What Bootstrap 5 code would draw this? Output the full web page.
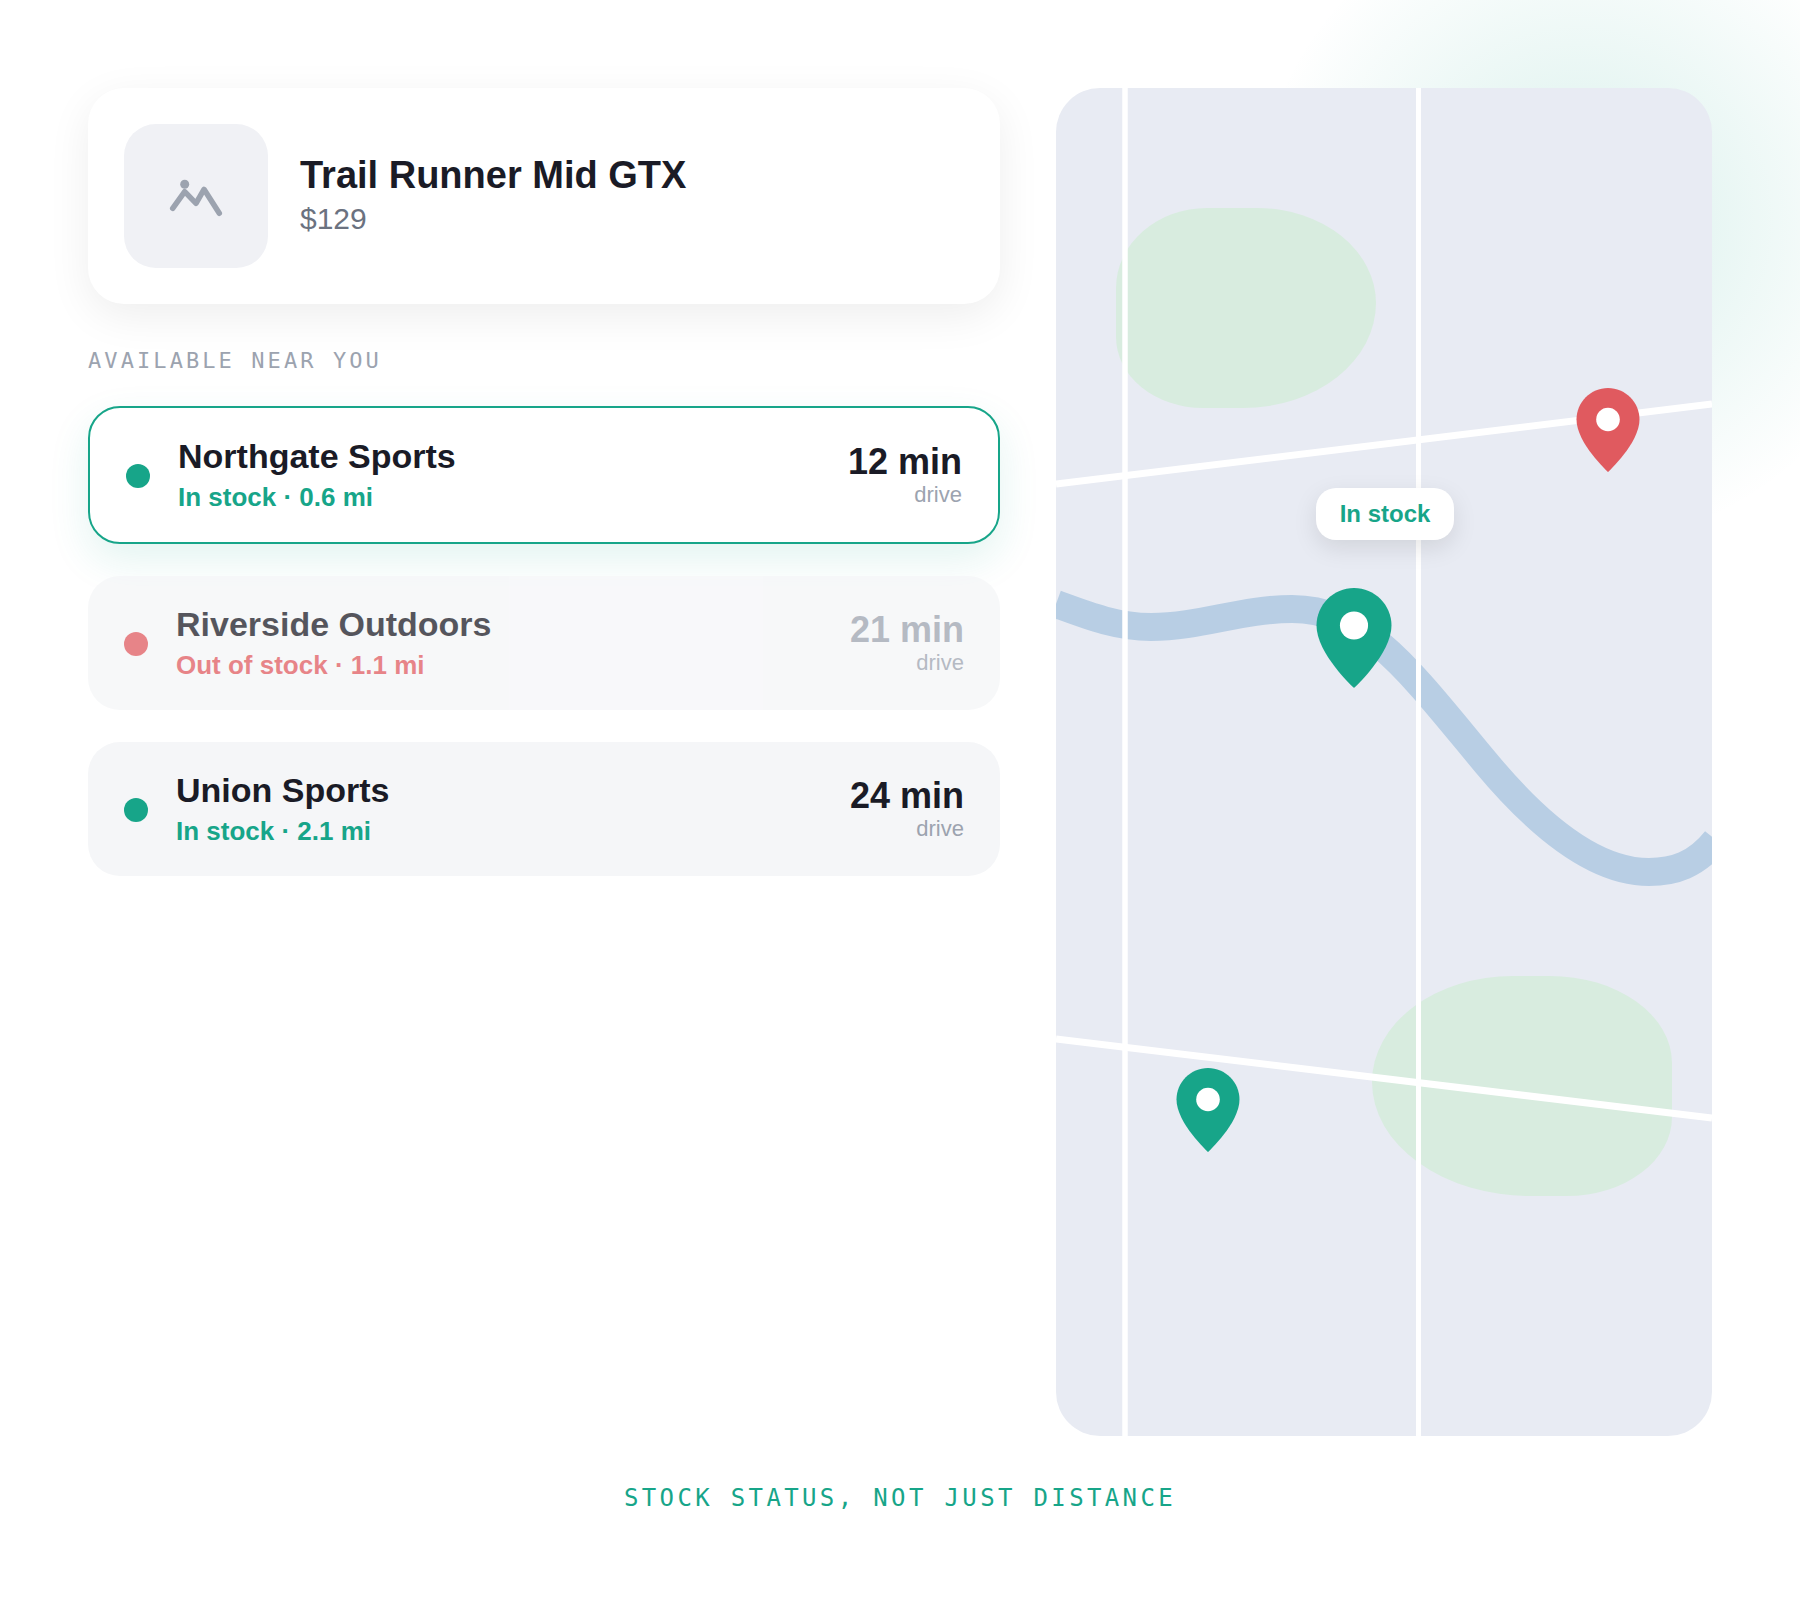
<!DOCTYPE html>
<html lang="en">
<head>
  <meta charset="UTF-8">
  <meta name="viewport" content="width=device-width, initial-scale=1.0">
  <title>Trail Runner Mid GTX - Stock nearby</title>
  <link href="https://cdn.jsdelivr.net/npm/bootstrap@5.3.0/dist/css/bootstrap.min.css" rel="stylesheet">
  <style>
    body { background: #fff; font-family: "Liberation Sans", Arial, sans-serif; color: #1a1b26; }
    .page-wrap { position: relative; width: 1800px; height: 1600px; overflow: clip; padding: 88px 88px 0; }
    .glow { position: absolute; left: 1250px; top: -110px; width: 660px; height: 660px; background: radial-gradient(circle, rgba(23, 165, 137, .17), transparent 70%); }
    .main-row { position: relative; gap: 56px; height: 1348px; }
    .left-col { width: 912px; }
    .product-card { background: #fff; border-radius: 36px; padding: 36px; gap: 32px; box-shadow: 0 12px 44px rgba(0, 0, 0, .07); }
    .product-thumb { width: 144px; height: 144px; border-radius: 32px; background: #f0f1f5; }
    .product-info { padding-bottom: 3px; }
    .product-name { font-size: 38px; line-height: 46px; font-weight: 700; margin-bottom: 3px; }
    .product-price { font-size: 30px; line-height: 36px; color: #6b7280; }
    .section-label { font-family: "DejaVu Sans Mono", monospace; font-size: 22px; letter-spacing: .14em; color: #9ca3af; margin: 44px 0 32px; line-height: 26px; }
    .store-list { gap: 32px; }
    .store-row { background: #f5f6f8; border-radius: 32px; padding: 28px 36px; height: 134px; gap: 28px; }
    .store-row.active-row { background: #fff; border: 2px solid #17a589; height: 138px; box-shadow: 0 16px 40px rgba(23, 165, 137, .12); }
    .store-row.faded { opacity: .74; }
    .dot { width: 24px; height: 24px; border-radius: 50%; background: #17a589; flex: none; margin-top: 2px; }
    .dot-out { background: #e05a5f; }
    .store-info { padding-bottom: 2px; }
    .store-name { font-size: 34px; line-height: 42px; font-weight: 700; margin-bottom: 4px; }
    .store-sub { font-size: 26px; line-height: 32px; font-weight: 700; color: #17a589; }
    .store-sub.out { color: #e05a5f; }
    .drive-min { font-size: 36px; line-height: 40px; font-weight: 700; }
    .faded .drive-min { color: #9ca3af; }
    .drive-lbl { font-size: 22px; line-height: 26px; color: #9ca3af; }
    .map-box { position: relative; width: 656px; height: 1348px; border-radius: 44px; background: #e8ebf3; overflow: clip; }
    .map-box svg.map-art { display: block; }
    .pin { position: absolute; display: block; }
    .pin-lg { width: 76px; height: 100px; }
    .pin-sm { width: 64px; height: 84px; }
    .stock-tip { position: absolute; left: 260px; top: 400px; width: 138px; height: 52px; border-radius: 20px; background: #fff; color: #17a589; font-size: 24px; font-weight: 700; box-shadow: 0 8px 24px rgba(0, 0, 0, .1); }
    .foot-note { position: relative; font-family: "DejaVu Sans Mono", monospace; font-size: 24px; letter-spacing: .14em; color: #17a589; text-align: center; margin-top: 48px; line-height: 28px; }
  </style>
</head>
<body>
  <div class="page-wrap">
    <div class="glow"></div>

    <div class="main-row d-flex">
      <div class="left-col">
        <div class="product-card d-flex align-items-center">
          <div class="product-thumb d-flex align-items-center justify-content-center">
            <svg width="60" height="60" viewBox="0 0 60 60" fill="none">
              <polyline points="6.7,42.3 18.7,25.7 30,37.3 38,23.3 53.3,47.3" stroke="#9ca3af" stroke-width="5.5" stroke-linecap="round" stroke-linejoin="round"/>
              <circle cx="18.7" cy="18.3" r="4.5" fill="#9ca3af"/>
            </svg>
          </div>
          <div class="product-info">
            <div class="product-name">Trail Runner Mid GTX</div>
            <div class="product-price">$129</div>
          </div>
        </div>

        <div class="section-label">AVAILABLE NEAR YOU</div>

        <div class="store-list d-flex flex-column">
          <div class="store-row active-row d-flex align-items-center">
            <span class="dot"></span>
            <div class="store-info flex-grow-1">
              <div class="store-name">Northgate Sports</div>
              <div class="store-sub">In stock · 0.6 mi</div>
            </div>
            <div class="text-end">
              <div class="drive-min">12 min</div>
              <div class="drive-lbl">drive</div>
            </div>
          </div>
          <div class="store-row faded d-flex align-items-center">
            <span class="dot dot-out"></span>
            <div class="store-info flex-grow-1">
              <div class="store-name">Riverside Outdoors</div>
              <div class="store-sub out">Out of stock · 1.1 mi</div>
            </div>
            <div class="text-end">
              <div class="drive-min">21 min</div>
              <div class="drive-lbl">drive</div>
            </div>
          </div>
          <div class="store-row d-flex align-items-center">
            <span class="dot"></span>
            <div class="store-info flex-grow-1">
              <div class="store-name">Union Sports</div>
              <div class="store-sub">In stock · 2.1 mi</div>
            </div>
            <div class="text-end">
              <div class="drive-min">24 min</div>
              <div class="drive-lbl">drive</div>
            </div>
          </div>
        </div>
      </div>

      <div class="map-box">
        <svg class="map-art" width="656" height="1348" viewBox="0 0 656 1348" fill="none">
          <path d="M151 120 H201 A119 95 0 0 1 320 215 A133 105 0 0 1 187 320 H147 A87 71 0 0 1 60 249 V200 A91 80 0 0 1 151 120 Z" fill="#d8ecdf"/>
          <path d="M457 888 H494 A122 87 0 0 1 616 975 V1029 A105 79 0 0 1 511 1108 H474 A158 114 0 0 1 316 994 A141 106 0 0 1 457 888 Z" fill="#d8ecdf"/>
          <path d="M0 516 C 30 527, 60 539, 95 539 C 145 539, 185 521, 236 521 C 310 521, 355 585, 430 675 C 490 747, 545 784, 593 784 C 618 784, 640 777, 660 752" stroke="#b8cee4" stroke-width="28"/>
          <line x1="69" y1="0" x2="69" y2="1348" stroke="#fff" stroke-width="5.5"/>
          <line x1="362.5" y1="0" x2="362.5" y2="1348" stroke="#fff" stroke-width="5"/>
          <line x1="0" y1="396" x2="656" y2="316" stroke="#fff" stroke-width="7"/>
          <line x1="0" y1="951" x2="656" y2="1030" stroke="#fff" stroke-width="7"/>
        </svg>

        <div class="stock-tip d-flex align-items-center justify-content-center">In stock</div>

        <svg class="pin pin-lg" style="left:260px;top:500px" viewBox="0 0 24 32"><path d="M12 0C5.4 0 0 5.4 0 12c0 9 12 20 12 20s12-11 12-20C24 5.4 18.6 0 12 0z" fill="#17a589"/><circle cx="12" cy="12" r="4.5" fill="#fff"/></svg>
        <svg class="pin pin-sm" style="left:520px;top:300px" viewBox="0 0 24 32"><path d="M12 0C5.4 0 0 5.4 0 12c0 9 12 20 12 20s12-11 12-20C24 5.4 18.6 0 12 0z" fill="#e05a5f"/><circle cx="12" cy="12" r="4.5" fill="#fff"/></svg>
        <svg class="pin pin-sm" style="left:120px;top:980px" viewBox="0 0 24 32"><path d="M12 0C5.4 0 0 5.4 0 12c0 9 12 20 12 20s12-11 12-20C24 5.4 18.6 0 12 0z" fill="#17a589"/><circle cx="12" cy="12" r="4.5" fill="#fff"/></svg>
      </div>
    </div>

    <div class="foot-note">STOCK STATUS, NOT JUST DISTANCE</div>
  </div>

  <script src="https://cdn.jsdelivr.net/npm/bootstrap@5.3.0/dist/js/bootstrap.bundle.min.js"></script>
</body>
</html>
